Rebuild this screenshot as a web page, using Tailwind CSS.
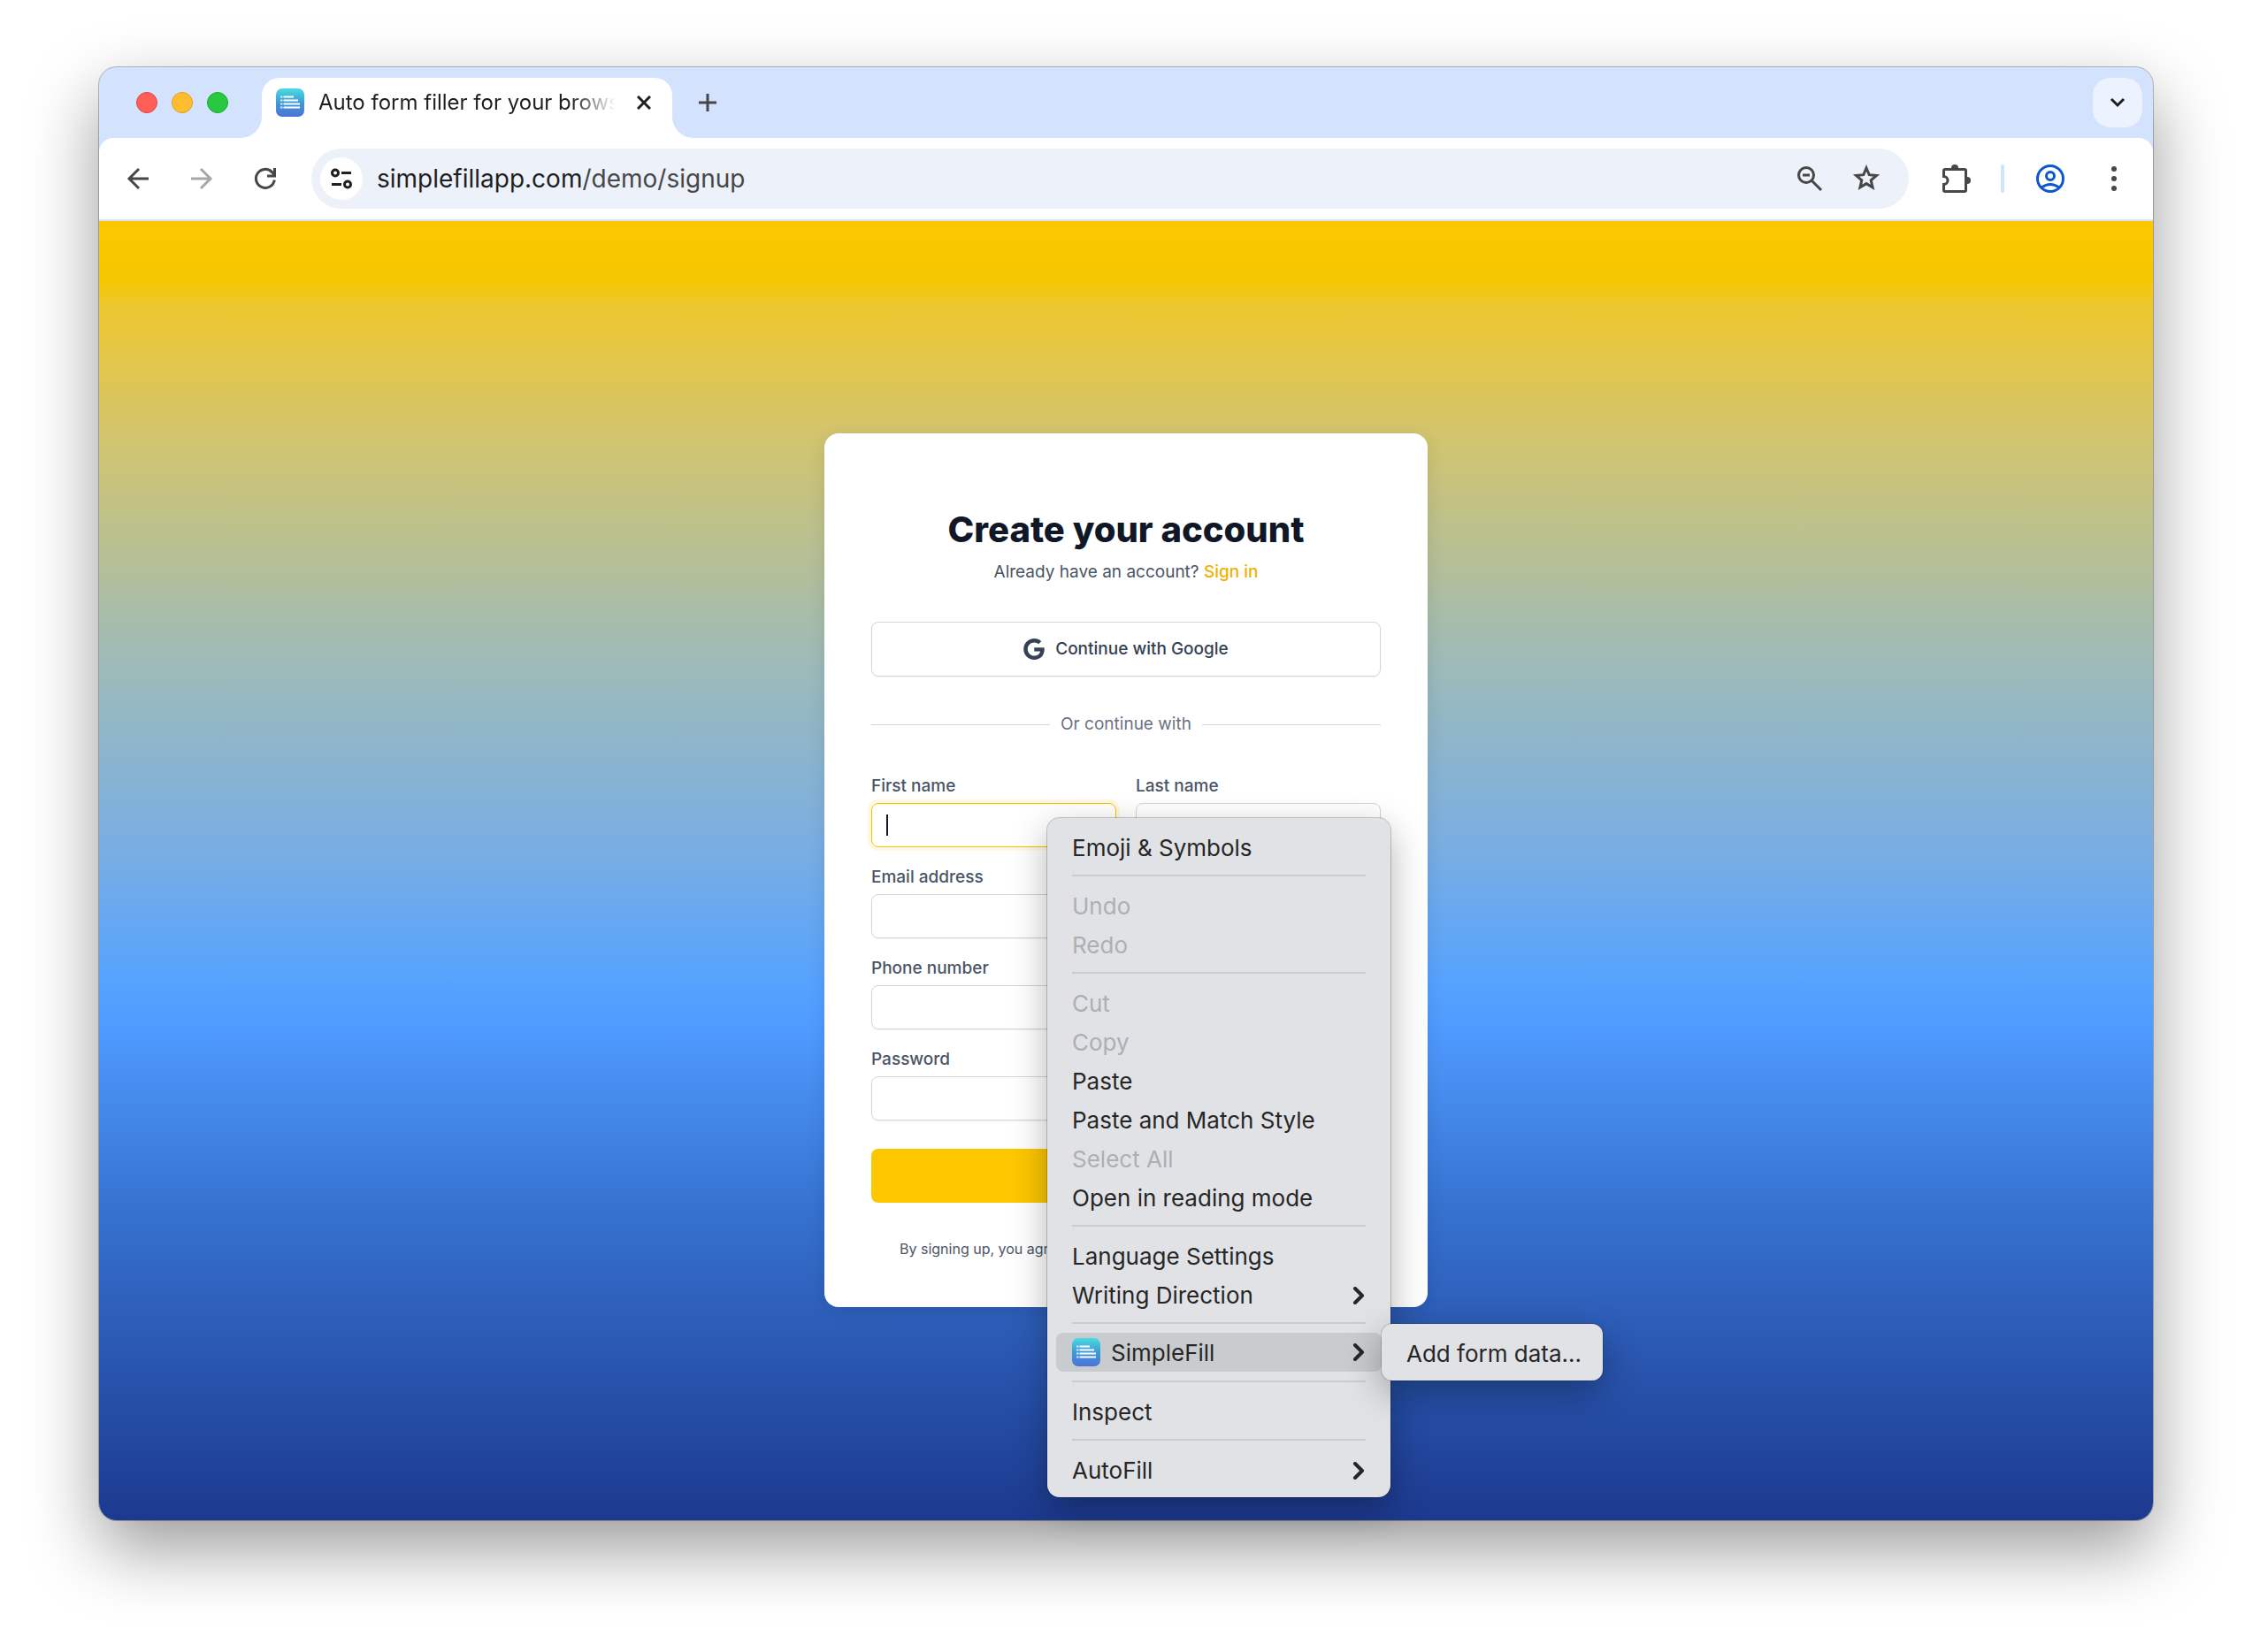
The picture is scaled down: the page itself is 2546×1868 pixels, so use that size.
<!DOCTYPE html>
<html lang="en">
<head>
    <meta charset="UTF-8">
    <meta name="viewport" content="width=device-width, initial-scale=1.0">
    <title>Auto form filler for your browser</title>
    <script src="https://cdn.jsdelivr.net/npm/@tailwindcss/browser@4"></script>
</head>
<body class="min-h-screen bg-white font-['Inter',sans-serif] flex flex-col px-[112px] pt-[76px] pb-[149px]">
    <div class="relative flex-1 flex flex-col rounded-[20px] bg-[#d3e3fd] shadow-[0_0_0_1px_rgba(0,0,0,0.25),0_32px_80px_rgba(0,0,0,0.4)]">

        <!-- tab strip -->
        <div class="h-20 flex items-end pl-[42px] pr-3">
            <div class="h-20 flex items-center gap-4 pr-[14px]">
                <span class="size-6 rounded-full bg-[#ff5f57] border border-[#e0443e]"></span>
                <span class="size-6 rounded-full bg-[#febc2e] border border-[#dea123]"></span>
                <span class="size-6 rounded-full bg-[#28c840] border border-[#1aab29]"></span>
            </div>
            <svg class="size-6" viewBox="0 0 24 24" fill="#fff"><path d="M24 0v24H0A24 24 0 0 0 24 0z"/></svg>
            <div class="w-[464px] h-[68px] bg-white rounded-t-[20px] flex items-center px-4 pb-3">
                <svg class="size-8 shrink-0" viewBox="0 0 32 32">
                    <defs>
                        <linearGradient id="logo" x1="0" y1="0" x2="0" y2="1"><stop offset="0" stop-color="#4bdbe0"/><stop offset=".5" stop-color="#3d9bd5"/><stop offset="1" stop-color="#4c72d8"/></linearGradient>
                    </defs>
                    <rect width="32" height="32" rx="7" fill="url(#logo)"/>
                    <path d="M8.500 9.500H20M8.500 13.500H25M8.500 17.500H27M8.500 21.500H27" stroke="#fff" stroke-width="2"/>
                    <path d="M5 9.500h2.500M5 13.500h2.500M5 17.500h2.500M5 21.500h2.500" stroke="#dbe6f5" stroke-width="2"/>
                </svg>
                <span class="ml-4 flex-1 overflow-hidden whitespace-nowrap text-2xl text-[#1f1f1f] mask-r-from-85% mask-r-to-100%">Auto form filler for your browser</span>
                <button class="ml-4 size-8 flex items-center justify-center" aria-label="Close tab">
                    <svg class="size-4" viewBox="0 0 16 16" stroke="#1f1f1f" stroke-width="3"><path d="M1 1l14 14M15 1L1 15"/></svg>
                </button>
            </div>
            <svg class="size-6" viewBox="0 0 24 24" fill="#fff"><path d="M0 0v24h24A24 24 0 0 1 0 0z"/></svg>
            <button class="h-20 w-8 flex items-center justify-center" aria-label="New tab">
                <svg class="size-5" viewBox="0 0 20 20" stroke="#474747" stroke-width="3"><path d="M10 0v20M0 10h20"/></svg>
            </button>
            <button class="ml-auto mb-3 size-14 rounded-[20px] bg-[#edf3fe] flex items-center justify-center" aria-label="Search tabs">
                <svg class="w-5 h-3" viewBox="0 0 20 12" fill="none" stroke="#1f1f1f" stroke-width="3"><path d="M3 2l7 7 7-7"/></svg>
            </button>
        </div>

        <!-- toolbar -->
        <div class="h-[94px] bg-white rounded-t-[16px] border-b-2 border-[#dfe3eb] flex items-center pl-6 pr-7">
            <button class="size-10 flex items-center justify-center" aria-label="Back">
                <svg class="size-8" viewBox="0 0 32 32" fill="none" stroke="#474747" stroke-width="3"><path d="M28 16H6M17 5L6 16l11 11"/></svg>
            </button>
            <button class="ml-8 size-10 flex items-center justify-center" aria-label="Forward">
                <svg class="size-8" viewBox="0 0 32 32" fill="none" stroke="#a8a8a8" stroke-width="3"><path d="M4 16h22M15 5l11 11-11 11"/></svg>
            </button>
            <button class="ml-8 size-10 flex items-center justify-center" aria-label="Reload">
                <svg class="size-8" viewBox="0 0 32 32" fill="none" stroke="#474747" stroke-width="3"><path d="M26.300 17.500A10.500 10.500 0 1 1 23.500 8.600l3 3M26.500 4v9h-8.500"/></svg>
            </button>
            <div class="ml-8 flex-1 h-[68px] rounded-full bg-[#ecf1fa] flex items-center pl-[10px] pr-8">
                <button class="size-12 rounded-full bg-white flex items-center justify-center" aria-label="Site information">
                    <svg class="size-7" viewBox="0 0 28 28" fill="none" stroke="#1f1f1f" stroke-width="3"><circle cx="7" cy="7.500" r="3.500"/><path d="M14 7.500h11M3 20.500h11"/><circle cx="21" cy="20.500" r="3.500"/></svg>
                </button>
                <span class="ml-4 flex-1 text-[28px] text-[#474747]"><span class="text-[#1f1f1f]">simplefillapp.com</span>/demo/signup</span>
                <button class="size-8" aria-label="Zoom">
                    <svg class="size-8" viewBox="0 0 32 32" fill="none" stroke="#474747" stroke-width="3"><circle cx="12" cy="12" r="8.500"/><path d="M18 18l11 11M8 12h8"/></svg>
                </button>
                <button class="ml-8 size-8" aria-label="Bookmark this page">
                    <svg class="size-8" viewBox="0 0 32 32" fill="none" stroke="#474747" stroke-width="3"><path d="M16 4l3.200 7.700 8.300.7-6.300 5.400 1.900 8.100L16 21.600l-7.100 4.300 1.900-8.100-6.300-5.400 8.300-.7z"/></svg>
                </button>
            </div>
            <button class="ml-[38px] size-8" aria-label="Extensions">
                <svg class="size-8" viewBox="0 0 32 32"><path d="M1.500 13.500V7q0-1.500 1.500-1.500H25q1.500 0 1.500 1.500V29q0 1.500-1.500 1.500H3q-1.500 0-1.500-1.500v-6.500a4.500 4.500 0 0 0 0-9z" fill="none" stroke="#474747" stroke-width="3"/><path d="M10 4a4 4 0 0 1 8 0zM28 14a4 4 0 0 1 0 8z" fill="#474747"/></svg>
            </button>
            <span class="ml-[34px] w-1 h-8 rounded-full bg-[#d3e3fd]"></span>
            <button class="ml-9 size-8" aria-label="Profile">
                <svg class="size-8" viewBox="0 0 32 32" fill="none" stroke="#0b57d0" stroke-width="3"><circle cx="16" cy="16" r="14.500"/><circle cx="16" cy="13" r="4.500"/><path d="M6 26q10-7 20 0"/></svg>
            </button>
            <button class="ml-10 size-8 flex items-center justify-center" aria-label="Menu">
                <svg class="size-8" viewBox="0 0 32 32" fill="#474747"><circle cx="16" cy="5" r="3"/><circle cx="16" cy="16" r="3"/><circle cx="16" cy="27" r="3"/></svg>
            </button>
        </div>

        <!-- page -->
        <main class="flex-1 rounded-b-[20px] flex justify-center items-start pt-[240px] bg-[linear-gradient(180deg,#fdc700_0%,#f4c700_4.500%,#edc72f_6.500%,#d4c56c_16%,#9dbbb8_34%,#7aaee2_48%,#54a2ff_59%,#4f9bff_62%,#3672d0_76%,#1c398e_100%)]">
            <div class="w-[682px] h-[988px] bg-white rounded-2xl px-[53px] pt-[83px] shadow-[0_4px_20px_rgba(0,0,0,0.1)]">
                <h1 class="text-center text-[40px] leading-[52px] font-extrabold text-[#101828]">Create your account</h1>
                <p class="mt-2 text-center text-[19px] leading-7 text-[#4a5565]">Already have an account? <a href="#" class="font-medium text-[#f0b100]">Sign in</a></p>
                <button class="mt-[42px] w-full h-[62px] rounded-lg border border-[#d1d5dc] shadow-xs flex items-center justify-center gap-3 text-[19px] leading-7 font-medium text-[#364153]">
                    <svg class="size-6" viewBox="0 0 24 24" fill="#364153"><path d="M12.240 10.285V14.400h6.806c-.275 1.765-2.056 5.174-6.806 5.174-4.095 0-7.439-3.389-7.439-7.574s3.345-7.574 7.439-7.574c2.330 0 3.891.989 4.785 1.849l3.254-3.138C18.189 1.186 15.479 0 12.240 0c-6.635 0-12 5.365-12 12s5.365 12 12 12c6.926 0 11.520-4.869 11.520-11.726 0-.788-.085-1.390-.189-1.989H12.240z"/></svg>
                    Continue with Google
                </button>
                <div class="mt-10 flex items-center gap-3 text-[19px] leading-7 text-[#6a7282]">
                    <span class="flex-1 h-px bg-[#d1d5dc]"></span>Or continue with<span class="flex-1 h-px bg-[#d1d5dc]"></span>
                </div>
                <form class="mt-[42px] flex flex-col gap-5 text-[19px] font-medium text-[#4a5565]">
                    <div class="grid grid-cols-2 gap-[22px]">
                        <div>
                            <label for="first" class="block leading-7">First name</label>
                            <div class="mt-[5px] h-[50px] flex items-center rounded-lg border border-[#f5c000] ring-4 ring-[#fff8e0] pl-4">
                                <span class="w-0.5 h-6 bg-[#101828]"></span>
                                <input id="first" type="text" class="w-full outline-none">
                            </div>
                        </div>
                        <div>
                            <label for="last" class="block leading-7">Last name</label>
                            <input id="last" type="text" class="mt-[5px] w-full h-[50px] rounded-lg border border-[#d1d5dc] shadow-xs px-4">
                        </div>
                    </div>
                    <div>
                        <label for="email" class="block leading-7">Email address</label>
                        <input id="email" type="email" class="mt-[5px] w-full h-[50px] rounded-lg border border-[#d1d5dc] shadow-xs px-4">
                    </div>
                    <div>
                        <label for="phone" class="block leading-7">Phone number</label>
                        <input id="phone" type="tel" class="mt-[5px] w-full h-[50px] rounded-lg border border-[#d1d5dc] shadow-xs px-4">
                    </div>
                    <div>
                        <label for="password" class="block leading-7">Password</label>
                        <input id="password" type="password" class="mt-[5px] w-full h-[50px] rounded-lg border border-[#d1d5dc] shadow-xs px-4">
                    </div>
                    <button type="submit" aria-label="Sign up" class="mt-3 h-[61px] rounded-lg bg-[#fdc700]"></button>
                </form>
                <p class="mt-10 pl-8 text-base leading-6 text-[#4a5565]">By signing up, you agree</p>
            </div>
        </main>

        <!-- context menu -->
        <div class="absolute left-[1072px] top-[849px] w-[388px] rounded-[14px] bg-[#e1e2e6] px-[10px] py-[10px] text-[26px] leading-8 text-[#262626] shadow-[0_0_0_1px_rgba(0,0,0,0.2),0_14px_40px_rgba(0,0,0,0.3)]">
            <button class="w-full h-11 px-[18px] pt-1 flex items-center">Emoji &amp; Symbols</button>
            <hr class="mx-[18px] my-[10px] border-t-2 border-[#cbccd0]">
            <button class="w-full h-11 px-[18px] pt-1 flex items-center text-[#adafb3]" disabled>Undo</button>
            <button class="w-full h-11 px-[18px] pt-1 flex items-center text-[#adafb3]" disabled>Redo</button>
            <hr class="mx-[18px] my-[10px] border-t-2 border-[#cbccd0]">
            <button class="w-full h-11 px-[18px] pt-1 flex items-center text-[#adafb3]" disabled>Cut</button>
            <button class="w-full h-11 px-[18px] pt-1 flex items-center text-[#adafb3]" disabled>Copy</button>
            <button class="w-full h-11 px-[18px] pt-1 flex items-center">Paste</button>
            <button class="w-full h-11 px-[18px] pt-1 flex items-center">Paste and Match Style</button>
            <button class="w-full h-11 px-[18px] pt-1 flex items-center text-[#adafb3]" disabled>Select All</button>
            <button class="w-full h-11 px-[18px] pt-1 flex items-center">Open in reading mode</button>
            <hr class="mx-[18px] my-[10px] border-t-2 border-[#cbccd0]">
            <button class="w-full h-11 px-[18px] pt-1 flex items-center">Language Settings</button>
            <button class="w-full h-11 px-[18px] pt-1 flex items-center justify-between">Writing Direction
                <svg class="w-4 h-5" viewBox="0 0 16 20" fill="none" stroke="#262626" stroke-width="4" stroke-linecap="round" stroke-linejoin="round"><path d="M4 2l8 8-8 8"/></svg>
            </button>
            <hr class="mx-[18px] my-[10px] border-t-2 border-[#cbccd0]">
            <button class="w-full h-11 px-[18px] flex items-center rounded-lg bg-[#c9ccce]">
                <svg class="size-8" viewBox="0 0 32 32">
                    <rect width="32" height="32" rx="7" fill="url(#logo)"/>
                    <path d="M8.500 9.500H20M8.500 13.500H25M8.500 17.500H27M8.500 21.500H27" stroke="#fff" stroke-width="2"/>
                    <path d="M5 9.500h2.500M5 13.500h2.500M5 17.500h2.500M5 21.500h2.500" stroke="#dbe6f5" stroke-width="2"/>
                </svg>
                <span class="ml-3 mr-auto pt-0.5">SimpleFill</span>
                <svg class="w-4 h-5" viewBox="0 0 16 20" fill="none" stroke="#262626" stroke-width="4" stroke-linecap="round" stroke-linejoin="round"><path d="M4 2l8 8-8 8"/></svg>
            </button>
            <hr class="mx-[18px] my-[10px] border-t-2 border-[#cbccd0]">
            <button class="w-full h-11 px-[18px] pt-1 flex items-center">Inspect</button>
            <hr class="mx-[18px] my-[10px] border-t-2 border-[#cbccd0]">
            <button class="w-full h-11 px-[18px] pt-1 flex items-center justify-between">AutoFill
                <svg class="w-4 h-5" viewBox="0 0 16 20" fill="none" stroke="#262626" stroke-width="4" stroke-linecap="round" stroke-linejoin="round"><path d="M4 2l8 8-8 8"/></svg>
            </button>
        </div>
        <div class="absolute left-[1450px] top-[1421px] w-[250px] rounded-[12px] bg-[#e1e2e6] px-[10px] py-[10px] text-[26px] leading-8 text-[#262626] shadow-[0_0_0_1px_rgba(0,0,0,0.15),0_14px_40px_rgba(0,0,0,0.3)]">
            <button class="w-full h-11 px-[18px] pt-1 flex items-center whitespace-nowrap">Add form data...</button>
        </div>
    </div>
</body>
</html>
